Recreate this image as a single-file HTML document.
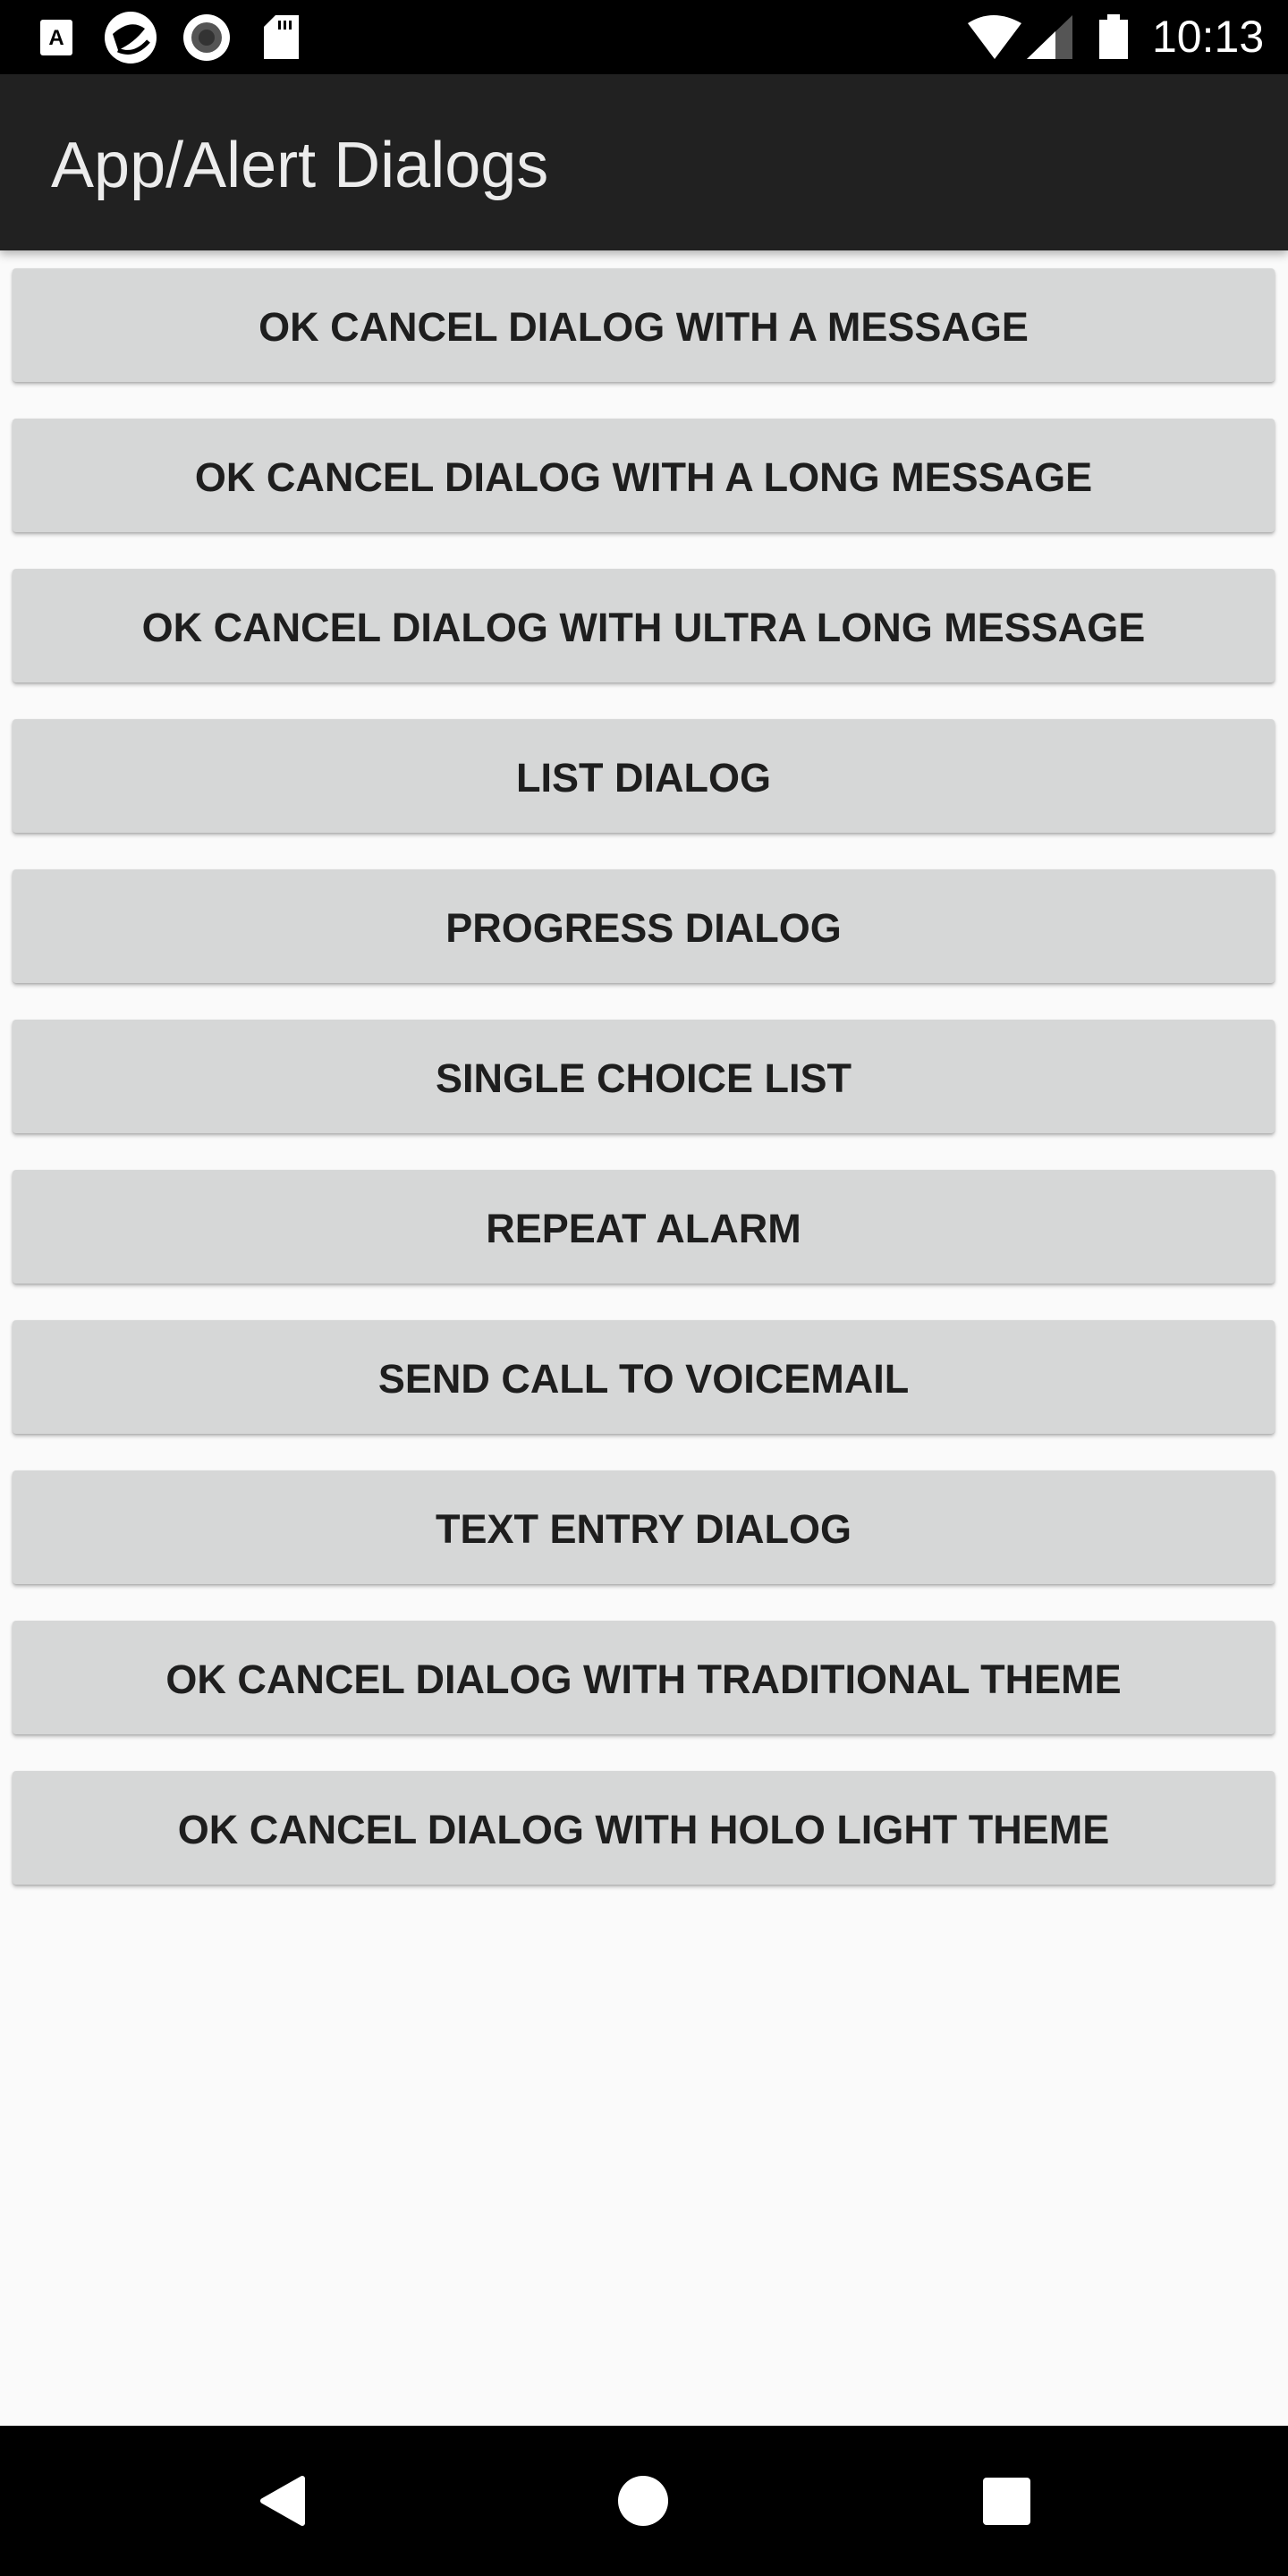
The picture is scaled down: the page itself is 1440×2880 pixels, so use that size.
<!DOCTYPE html>
<html><head><meta charset="utf-8"><style>
*{margin:0;padding:0;box-sizing:border-box}
body{width:1440px;height:2880px;background:#fafafa;position:relative;overflow:hidden;font-family:"Liberation Sans",sans-serif}
.sb{position:absolute;left:0;top:0;width:1440px;height:83px;background:#000}
.ab{position:absolute;left:0;top:83px;width:1440px;height:197px;background:#212121;box-shadow:0 4px 10px rgba(0,0,0,.3)}
.ab span{position:absolute;display:block;left:57px;top:62px;line-height:80px;color:#ececec;font-size:72px;}
.btn{position:absolute;left:14px;width:1411px;height:127px;padding-top:4px;background:#d6d7d7;border-radius:4px;box-shadow:0 3px 4px rgba(0,0,0,.22),0 1px 2px rgba(0,0,0,.15);display:flex;align-items:center;justify-content:center;font-size:45px;font-weight:bold;color:#1e1e1e}
.nav{position:absolute;left:0;top:2712px;width:1440px;height:168px;background:#000}
.time{position:absolute;left:1288px;top:12px;color:#fff;font-size:50px}
</style></head><body>
<div class="sb">
<svg width="1440" height="83" style="position:absolute;left:0;top:0">
<rect x="45" y="22" width="36" height="40" rx="3" fill="#fff"/><text x="63" y="50" font-size="24" font-weight="bold" text-anchor="middle" fill="#000" font-family="Liberation Sans">A</text>
<circle cx="146" cy="42" r="29" fill="#fff"/><path d="M126 38 Q146 20 162 32 Q150 48 132 56 Z" fill="#000"/><path d="M166 46 Q150 64 132 56" stroke="#000" stroke-width="5" fill="none"/>
<circle cx="231" cy="42" r="26" fill="#fff"/><circle cx="231" cy="42" r="17" fill="#555"/><circle cx="231" cy="42" r="9" fill="#333"/>
<path d="M308 17 H334 V66 H295 V30 Z" fill="#fff"/><rect x="311" y="23" width="3" height="10" fill="#000"/><rect x="317" y="23" width="3" height="10" fill="#000"/><rect x="323" y="23" width="3" height="10" fill="#000"/>
<path d="M1082 26 Q1110 8 1142 26 L1112 66 Z" fill="#fff"/>
<path d="M1148 66 L1199 17 V66 Z" fill="#555"/><path d="M1148 66 L1180 35 V66 Z" fill="#fff"/>
<rect x="1229" y="22" width="32" height="44" fill="#fff"/><rect x="1238" y="16" width="14" height="6" fill="#fff"/>
</svg>
<div class="time">10:13</div>
</div>
<div class="ab"><span>App/Alert Dialogs</span></div>
<div class="btn" style="top:300px">OK CANCEL DIALOG WITH A MESSAGE</div>
<div class="btn" style="top:468px">OK CANCEL DIALOG WITH A LONG MESSAGE</div>
<div class="btn" style="top:636px">OK CANCEL DIALOG WITH ULTRA LONG MESSAGE</div>
<div class="btn" style="top:804px">LIST DIALOG</div>
<div class="btn" style="top:972px">PROGRESS DIALOG</div>
<div class="btn" style="top:1140px">SINGLE CHOICE LIST</div>
<div class="btn" style="top:1308px">REPEAT ALARM</div>
<div class="btn" style="top:1476px">SEND CALL TO VOICEMAIL</div>
<div class="btn" style="top:1644px">TEXT ENTRY DIALOG</div>
<div class="btn" style="top:1812px">OK CANCEL DIALOG WITH TRADITIONAL THEME</div>
<div class="btn" style="top:1980px">OK CANCEL DIALOG WITH HOLO LIGHT THEME</div>
<div class="nav">
<svg width="1440" height="168" style="position:absolute;left:0;top:0">
<path d="M338 59 L338 109 L294 84 Z" fill="#fff" stroke="#fff" stroke-width="6" stroke-linejoin="round"/>
<circle cx="719" cy="84" r="28" fill="#fff"/>
<rect x="1099" y="58" width="53" height="53" rx="4" fill="#fff"/>
</svg>
</div>
</body></html>
